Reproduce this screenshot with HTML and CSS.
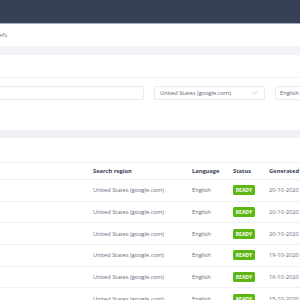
FILE: index.html
```html
<!DOCTYPE html>
<html>
<head>
<meta charset="utf-8">
<link rel="stylesheet" href="styles.css">
</head>
<body>
<header class="topbar"></header>
<nav class="crumbs"><span class="crumb">Briefs</span></nav>
<div class="band"></div>
<div class="spacer"></div>
<section class="card filters">
  <div class="field field-keyword"></div>
  <div class="field field-select">
    <span>United States (google.com)</span>
    <svg class="chev" width="6" height="4" viewBox="0 0 6 4"><path d="M0.5 0.8 L3 3.2 L5.5 0.8" fill="none" stroke="#c4c8d0" stroke-width="0.8"/></svg>
  </div>
  <div class="field field-lang"><span>English</span></div>
</section>
<div class="band band2"></div>
<section class="card table-card">
  <div class="table">
    <div class="row head">
      <div></div><div>Search region</div><div>Language</div><div>Status</div><div class="nowrap">Generated on</div>
    </div>
    <div class="row"><div></div><div>United States (google.com)</div><div>English</div><div><span class="badge">READY</span></div><div>20-10-2020</div></div>
    <div class="row"><div></div><div>United States (google.com)</div><div>English</div><div><span class="badge">READY</span></div><div>20-10-2020</div></div>
    <div class="row"><div></div><div>United States (google.com)</div><div>English</div><div><span class="badge">READY</span></div><div>20-10-2020</div></div>
    <div class="row"><div></div><div>United States (google.com)</div><div>English</div><div><span class="badge">READY</span></div><div>19-10-2020</div></div>
    <div class="row"><div></div><div>United States (google.com)</div><div>English</div><div><span class="badge">READY</span></div><div>16-10-2020</div></div>
    <div class="row"><div></div><div>United States (google.com)</div><div>English</div><div><span class="badge">READY</span></div><div>15-10-2020</div></div>
  </div>
</section>
</body>
</html>
```

FILE: styles.css
```css
html, body {
  margin: 0;
  padding: 0;
  background: #ffffff;
  overflow: hidden;
}
body {
  font-family: "Open Sans", "Noto Sans", sans-serif;
  font-size: 5.7px;
  color: #656b7c;
  width: 300px;
  height: 300px;
}
.topbar {
  height: 23px;
  background: #364155;
  border-bottom: 1px solid #a7acb6;
}
.crumbs {
  height: 22px;
  display: flex;
  align-items: center;
  overflow: hidden;
}
.crumb {
  margin-left: -9px;
  font-size: 6px;
  color: #6b7183;
}
.band {
  height: 9px;
  background: #f3f4f9;
}
.spacer {
  height: 22px;
}
.card {
  background: #ffffff;
  border-top: 1px solid #eef0f4;
}
.filters {
  height: 53px;
  display: flex;
  align-items: flex-start;
  padding-top: 8px;
  box-sizing: border-box;
  gap: 10px;
  overflow: hidden;
}
.field {
  height: 14px;
  box-sizing: border-box;
  border: 1px solid #e9ebf0;
  border-radius: 2px;
  background: #fff;
  display: flex;
  align-items: center;
  flex-shrink: 0;
}
.field-keyword {
  margin-left: -10px;
  width: 154px;
}
.field-select {
  width: 111px;
  padding: 0 6px 0 5px;
  justify-content: space-between;
  color: #5d6374;
}
.field-lang {
  width: 60px;
  padding-left: 4px;
  color: #5d6374;
}
.band2 {
  height: 8px;
  background: #eef0f6;
}
.table-card {
  border-top: none;
  padding-top: 24px;
}
.row {
  display: grid;
  grid-template-columns: 93px 99px 41px 36px 60px;
  height: 21.7px;
  align-items: center;
  border-top: 1px solid #eef0f3;
  box-sizing: border-box;
  white-space: nowrap;
}
.row.head {
  height: 17px;
  font-weight: 700;
  color: #3a4255;
}
.badge {
  display: inline-block;
  background: #5db712;
  color: #fff;
  font-weight: 700;
  font-size: 5px;
  line-height: 10px;
  height: 10px;
  width: 22px;
  text-align: center;
  border-radius: 1.5px;
}
```
